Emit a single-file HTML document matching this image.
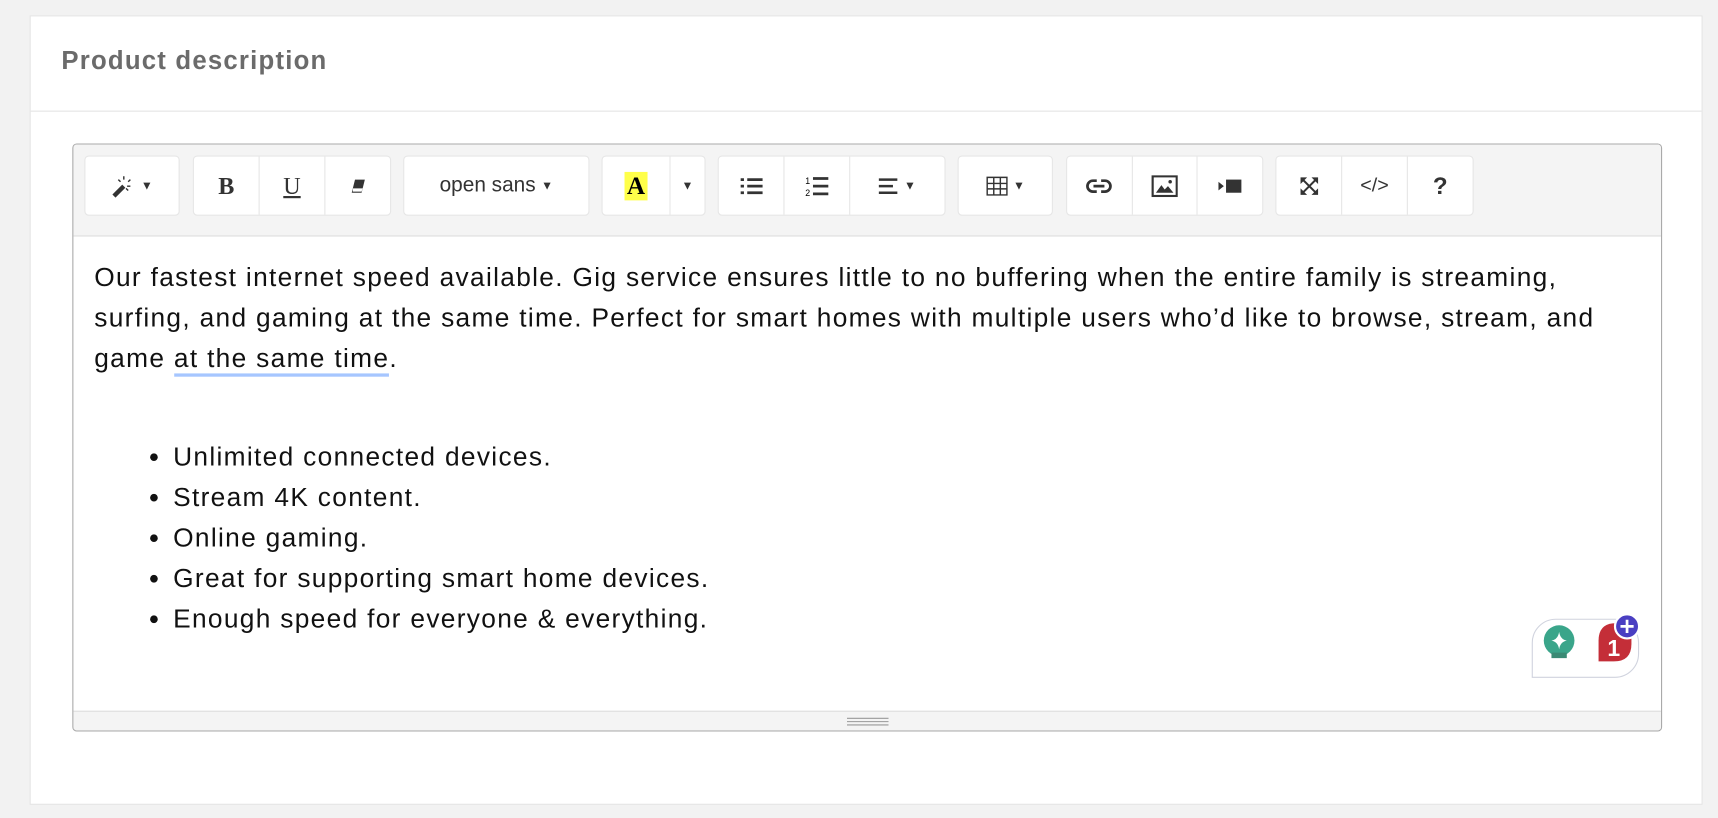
<!DOCTYPE html>
<html><head><meta charset="utf-8"><style>
html,body{margin:0;padding:0;background:#f2f2f2;overflow:hidden}
#s{position:absolute;left:0;top:0;width:1568px;height:747px;transform:scale(1.09566,1.09505);transform-origin:0 0;font-family:"Liberation Sans",sans-serif}
.panel{position:absolute;left:27px;top:14px;width:1525px;height:719px;background:#fff;border:1px solid #e4e4e4}
.hdr{position:absolute;left:0;top:0;right:0;height:86px;border-bottom:1px solid #e4e4e4}
.hdr span{position:absolute;left:28px;top:27px;font-size:23.5px;letter-spacing:1.1px;font-weight:bold;color:#6b6b6b}
.ed{position:absolute;left:38px;top:116px;width:1449px;height:535px;border:1px solid #a9a9a9;border-radius:4px;overflow:hidden;background:#fff}
.tb{position:absolute;left:0;top:0;right:0;height:83px;background:#f4f4f4;border-bottom:1px solid #ddd}
.g{position:absolute;top:10px;height:53px;background:#fff;border:1px solid #e6e6e6;border-radius:4px;display:flex}
.b{height:53px;border-left:1px solid #e6e6e6;display:flex;align-items:center;justify-content:center;color:#333;font-size:18px}
.b:first-child{border-left:none}
.car{font-size:11px;margin-left:5px}
.ct{position:absolute;left:19px;top:103px;font-size:24px;letter-spacing:1.2px;line-height:37px;color:#111;white-space:nowrap}
ul{margin:53px 0 0 0;padding-left:72px}
li{line-height:37px}
.sb{position:absolute;left:0;right:0;bottom:0;height:17px;background:#f4f4f4;border-top:1px solid #ddd}
</style></head><body><div id="s">
<div class="panel">
<div class="hdr"><span>Product description</span></div>
<div class="ed">
<div class="tb">
<div class="g" style="left:10px;width:85px"><div class="b" style="width:85px"><svg width="22" height="22" viewBox="0 0 22 22"><path d="M2 20 L11 11" stroke="#333" stroke-width="4"/><path d="M11 2v3M17 5l-2 2M14 11h3M6 5l2 2M15 15l-2-2" stroke="#333" stroke-width="1.3"/></svg><span class="car">▼</span></div></div>
<div class="g" style="left:109px;width:179px"><div class="b" style="width:59px;font-family:'Liberation Serif',serif;font-weight:bold;font-size:22px">B</div><div class="b" style="width:59px;font-family:'Liberation Serif',serif;font-size:22px;text-decoration:underline">U</div><div class="b" style="width:59px"><svg width="16" height="16" viewBox="0 0 16 16"><path d="M5 2h9l-3 12H2z" fill="#333"/><path d="M3 10h9l-1 3H3z" fill="#fff"/></svg></div></div>
<div class="g" style="left:301px;width:168px"><div class="b" style="width:168px;font-size:19px">open sans<span class="car">▼</span></div></div>
<div class="g" style="left:482px;width:93px"><div class="b" style="width:61px"><span style="background:#ffff4a;font-family:'Liberation Serif',serif;font-weight:bold;font-size:23px;padding:0 2px;color:#000">A</span></div><div class="b" style="width:31px"><span class="car" style="margin:0">▼</span></div></div>
<div class="g" style="left:588px;width:206px"><div class="b" style="width:59px"><svg width="22" height="18"><path d="M1 3h3M7 3h14M1 9h3M7 9h14M1 15h3M7 15h14" stroke="#333" stroke-width="2.5"/></svg></div><div class="b" style="width:59px"><svg width="22" height="20"><text x="0" y="8" font-size="8" font-family="Liberation Sans">1</text><text x="0" y="19" font-size="8" font-family="Liberation Sans">2</text><path d="M7 3h14M7 10h14M7 17h14" stroke="#333" stroke-width="2.5"/></svg></div><div class="b" style="width:86px"><svg width="18" height="16"><path d="M0 2h17M0 8h13M0 14h17" stroke="#333" stroke-width="2.3"/></svg><span class="car">▼</span></div></div>
<div class="g" style="left:807px;width:85px"><div class="b" style="width:85px"><svg width="20" height="18"><path d="M1 1h18v16H1zM1 6.5h18M1 11.5h18M7 1v16M13 1v16" stroke="#333" stroke-width="1.3" fill="none"/></svg><span class="car">▼</span></div></div>
<div class="g" style="left:906px;width:178px"><div class="b" style="width:59px"><svg width="24" height="14"><rect x="1.5" y="2" width="21" height="10" rx="5" stroke="#333" stroke-width="2.5" fill="none"/><path d="M7 7h10" stroke="#333" stroke-width="2.5"/><path d="M10 2h4M10 12h4" stroke="#fff" stroke-width="3"/></svg></div><div class="b" style="width:59px"><svg width="24" height="20"><rect x="1" y="1" width="22" height="18" stroke="#333" stroke-width="2" fill="none"/><path d="M4 16l5-7 3 4 3-3 5 6z" fill="#333"/><circle cx="17" cy="6" r="1.6" fill="#333"/></svg></div><div class="b" style="width:59px"><svg width="22" height="14"><path d="M0 3l5 4-5 4z" fill="#333"/><rect x="7" y="1" width="14" height="12" fill="#333"/></svg></div></div>
<div class="g" style="left:1097px;width:179px"><div class="b" style="width:59px"><svg width="20" height="20"><path d="M3 3l14 14M17 3L3 17" stroke="#333" stroke-width="1.8"/><path d="M2 2h6L2 8zM18 2h-6l6 6zM2 18h6l-6-6zM18 18h-6l6-6z" fill="#333"/></svg></div><div class="b" style="width:59px;font-size:18px">&lt;/&gt;</div><div class="b" style="width:59px;font-weight:bold;font-size:22px">?</div></div>
</div>
<div class="ct">Our fastest internet speed available. Gig service ensures little to no buffering when the entire family is streaming,<br>surfing, and gaming at the same time. Perfect for smart homes with multiple users who’d like to browse, stream, and<br>game <span style="border-bottom:3px solid #a6c6ff">at the same time</span>.
<ul><li>Unlimited connected devices.</li><li>Stream 4K content.</li><li>Online gaming.</li><li>Great for supporting smart home devices.</li><li>Enough speed for everyone &amp; everything.</li></ul></div>
<div style="position:absolute;left:1331px;top:433px;width:96px;height:52px;border:1.5px solid #d0d3de;border-radius:22px 22px 22px 0;background:#fff"></div>
<svg style="position:absolute;left:1336px;top:424px" width="100" height="66"><circle cx="20" cy="29" r="14" fill="#3aa58a"/><path d="M13 40h14v5H13z" fill="#3a8a74"/><path d="M20 21q1 7 7 8q-6 1-7 8q-1-7-7-8q6-1 7-8z" fill="#fff"/><path d="M56 48V29q0-16 16-16h14v19q0 16-16 16z" fill="#c42e38"/><text x="64" y="43" font-size="21" font-weight="bold" fill="#fff" font-family="Liberation Sans">1</text><circle cx="82" cy="16" r="11" fill="#4a3fc2" stroke="#fff" stroke-width="2"/><path d="M82 10v12M76 16h12" stroke="#fff" stroke-width="2.5"/></svg>
<div class="sb"><svg style="position:absolute;left:706px;top:5px" width="38" height="8"><path d="M0 1h38M0 4h38M0 7h38" stroke="#999" stroke-width="1"/></svg></div>
</div>
</div>
</div></body></html>
